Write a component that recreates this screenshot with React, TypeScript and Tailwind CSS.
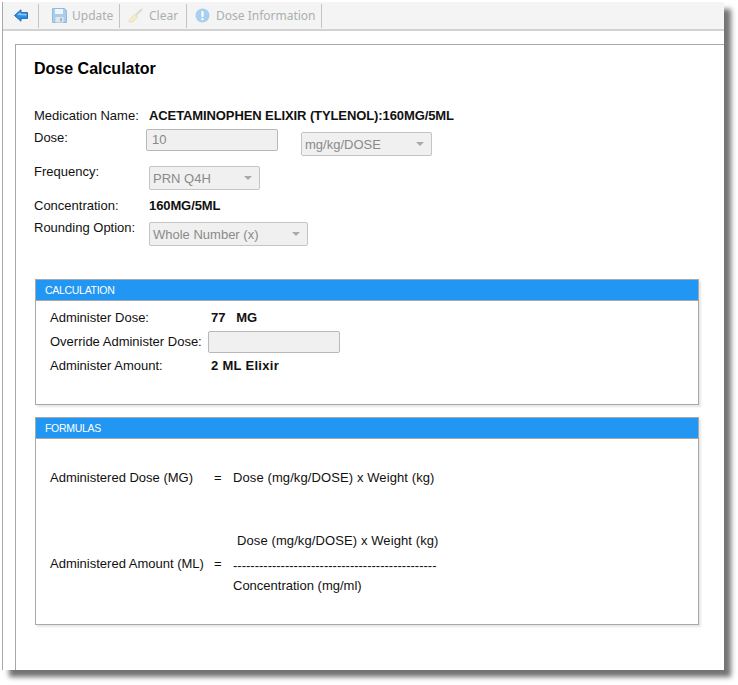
import type {ReactNode} from "react";

function ArrowIcon(){
  return(
    <svg width="14" height="13" viewBox="0 0 14 13" className="shrink-0">
      <path d="M0.5 6.5 L7 0.8 V3.6 H13.5 V9.4 H7 V12.2 Z" fill="#2f8fe0" stroke="#1a68b8" strokeWidth="1"/>
      <path d="M3 6 L6.5 3 V4.8 H12.5 V6.5 Z" fill="#8cc8f4"/>
    </svg>
  );
}

function SaveIcon(){
  return(
    <svg width="15" height="15" viewBox="0 0 15 15" className="shrink-0">
      <path d="M0.5 0.5 H12.5 L14.5 2.5 V14.5 H0.5 Z" fill="#a9cdea" stroke="#8fbbdd"/>
      <rect x="3" y="1" width="8" height="5" fill="#eef5fb"/>
      <rect x="3.5" y="9" width="8" height="5.5" fill="#dfe7ee"/>
      <rect x="8" y="10" width="2" height="3.5" fill="#9fb8cc"/>
    </svg>
  );
}

function BroomIcon(){
  return(
    <svg width="15" height="15" viewBox="0 0 15 15" className="shrink-0">
      <path d="M14 1 L7 8" stroke="#dcdcd6" strokeWidth="2.4"/>
      <path d="M7 6 L10 9 L5 14 H1 V12 Z" fill="#f2ecc8" stroke="#e2dab0" strokeWidth="0.7"/>
    </svg>
  );
}

function InfoIcon(){
  return(
    <svg width="15" height="15" viewBox="0 0 15 15" className="shrink-0">
      <circle cx="7.5" cy="7.5" r="7" fill="#a6cff0"/>
      <rect x="6.4" y="3" width="2.2" height="6" rx="0.8" fill="#ffffff"/>
      <rect x="6.4" y="10" width="2.2" height="2.2" rx="0.8" fill="#ffffff"/>
    </svg>
  );
}

function Sep(){
  return <div className="h-[24px] w-px bg-[#c4c4c4] shrink-0"/>;
}

function ToolButton({icon,label,className,gap}:{icon:ReactNode;label:string;className:string;gap:string}){
  return(
    <div className={"flex items-center shrink-0 "+className}>
      {icon}
      <span className={"text-[12px] text-[#a9b0b0] font-['Noto_Sans',sans-serif] "+gap}>{label}</span>
    </div>
  );
}

function Select({label,width}:{label:string;width:string}){
  return(
    <div className={"h-[24px] rounded-[2px] border border-[#c4c4c4] bg-[#f0f0f0] flex items-center pl-[3px] pr-[7px] justify-between text-[#8a8a8a] text-[13px] "+width}>
      <span className="pt-[1px]">{label}</span>
      <span className="w-0 h-0 border-x-[4px] border-x-transparent border-t-[4px] border-t-[#aaaaaa]"/>
    </div>
  );
}

function Panel({title,height,children}:{title:string;height:string;children:ReactNode}){
  return(
    <section className={"w-[664px] border border-[#a8a8a8] bg-white shadow-[2px_2px_2px_rgba(0,0,0,0.1)] "+height}>
      <h2 className="h-[20px] bg-[#2196f3] border-b border-[#a8a8a8] box-content text-white text-[10.5px] tracking-[-0.3px] leading-[20px] pl-[9px] font-normal">{title}</h2>
      {children}
    </section>
  );
}

export default function App(){
  return(
    <div className="w-[738px] h-[685px] bg-white pt-[2px] pl-[2px] overflow-hidden font-['Liberation_Sans',Arial,sans-serif] text-[#111111]">
      <div className="w-[722px] h-[668px] flex flex-col border-l border-[#a8a8a8] bg-white shadow-[7px_7px_5px_rgba(0,0,0,0.55)]">
        {/* toolbar */}
        <div className="h-[29px] shrink-0 bg-[#f4f4f4] border-b-[2px] border-[#d2d2d2] flex items-center pl-[11px]">
          <ArrowIcon/>
          <div className="ml-[10px]"><Sep/></div>
          <ToolButton icon={<SaveIcon/>} label="Update" gap="ml-[5px]" className="ml-[13px] w-[67px]"/>
          <Sep/>
          <ToolButton icon={<BroomIcon/>} label="Clear" gap="ml-[6px]" className="ml-[8px] w-[58px]"/>
          <Sep/>
          <ToolButton icon={<InfoIcon/>} label="Dose Information" gap="ml-[6px]" className="ml-[8px] w-[126px]"/>
          <Sep/>
        </div>

        {/* content */}
        <div className="mt-[13px] ml-[12px] flex-1 border-l border-t border-[#a8a8a8] pl-[18px] pt-[14px]">
          <h1 className="text-[16px] leading-[20px] font-bold text-black">Dose Calculator</h1>

          <div className="mt-[29px] text-[13px]">
            <div className="flex h-[16px] items-center">
              <span className="w-[115px]">Medication Name:</span>
              <b className="tracking-[-0.1px]">ACETAMINOPHEN ELIXIR (TYLENOL):160MG/5ML</b>
            </div>
            <div className="flex mt-[5px] h-[30px]">
              <span className="w-[112px] leading-[16px] pt-[1px]">Dose:</span>
              <div className="w-[132px] h-[22px] rounded-[2px] border border-[#b8b8b8] bg-[#f0f0f0] pl-[5px] leading-[20px] text-[#888888] text-[13px]">10</div>
              <Select label="mg/kg/DOSE" width="ml-[23px] w-[131px] mt-[3px]"/>
            </div>
            <div className="flex mt-[5px] h-[26px]">
              <span className="w-[115px] leading-[16px]">Frequency:</span>
              <Select label="PRN Q4H" width="w-[111px] mt-[2px]"/>
            </div>
            <div className="flex mt-[8px] h-[16px] items-center">
              <span className="w-[115px]">Concentration:</span>
              <b className="tracking-[-0.1px]">160MG/5ML</b>
            </div>
            <div className="flex mt-[6px] h-[26px]">
              <span className="w-[115px] leading-[16px]">Rounding Option:</span>
              <Select label="Whole Number (x)" width="w-[159px] mt-[2px]"/>
            </div>
          </div>

          <div className="mt-[33px] ml-[1px]">
            <Panel title="CALCULATION" height="h-[126px]">
              <div className="pl-[14px] pt-[9px] text-[13px]">
                <div className="flex h-[16px] items-center">
                  <span className="w-[161px]">Administer Dose:</span>
                  <b>77&nbsp;&nbsp; MG</b>
                </div>
                <div className="flex h-[22px] mt-[5px] items-center">
                  <span className="w-[158px]">Override Administer Dose:</span>
                  <div className="w-[132px] h-[22px] rounded-[2px] border border-[#b8b8b8] bg-[#f0f0f0]"/>
                </div>
                <div className="flex h-[16px] mt-[5px] items-center">
                  <span className="w-[161px]">Administer Amount:</span>
                  <b className="tracking-[0.3px]">2 ML Elixir</b>
                </div>
              </div>
            </Panel>

            <div className="mt-[12px]">
              <Panel title="FORMULAS" height="h-[208px]">
                <div className="pl-[14px] pt-[31px] text-[13px]">
                  <div className="flex h-[16px] items-center">
                    <span className="w-[164px]">Administered Dose (MG)</span>
                    <span className="w-[19px]">=</span>
                    <span className="tracking-[0.1px]">Dose (mg/kg/DOSE) x Weight (kg)</span>
                  </div>
                  <div className="flex mt-[47px]">
                    <span className="w-[164px] self-center">Administered Amount (ML)</span>
                    <span className="w-[19px] self-center">=</span>
                    <div className="flex flex-col">
                      <span className="pl-[4px] h-[22px] leading-[16px] tracking-[0.1px]">Dose (mg/kg/DOSE) x Weight (kg)</span>
                      <span className="h-[22px] leading-[22px] whitespace-nowrap">-----------------------------------------------</span>
                      <span className="h-[17px] leading-[18px]">Concentration (mg/ml)</span>
                    </div>
                  </div>
                </div>
              </Panel>
            </div>
          </div>
        </div>
      </div>
    </div>
  );
}
